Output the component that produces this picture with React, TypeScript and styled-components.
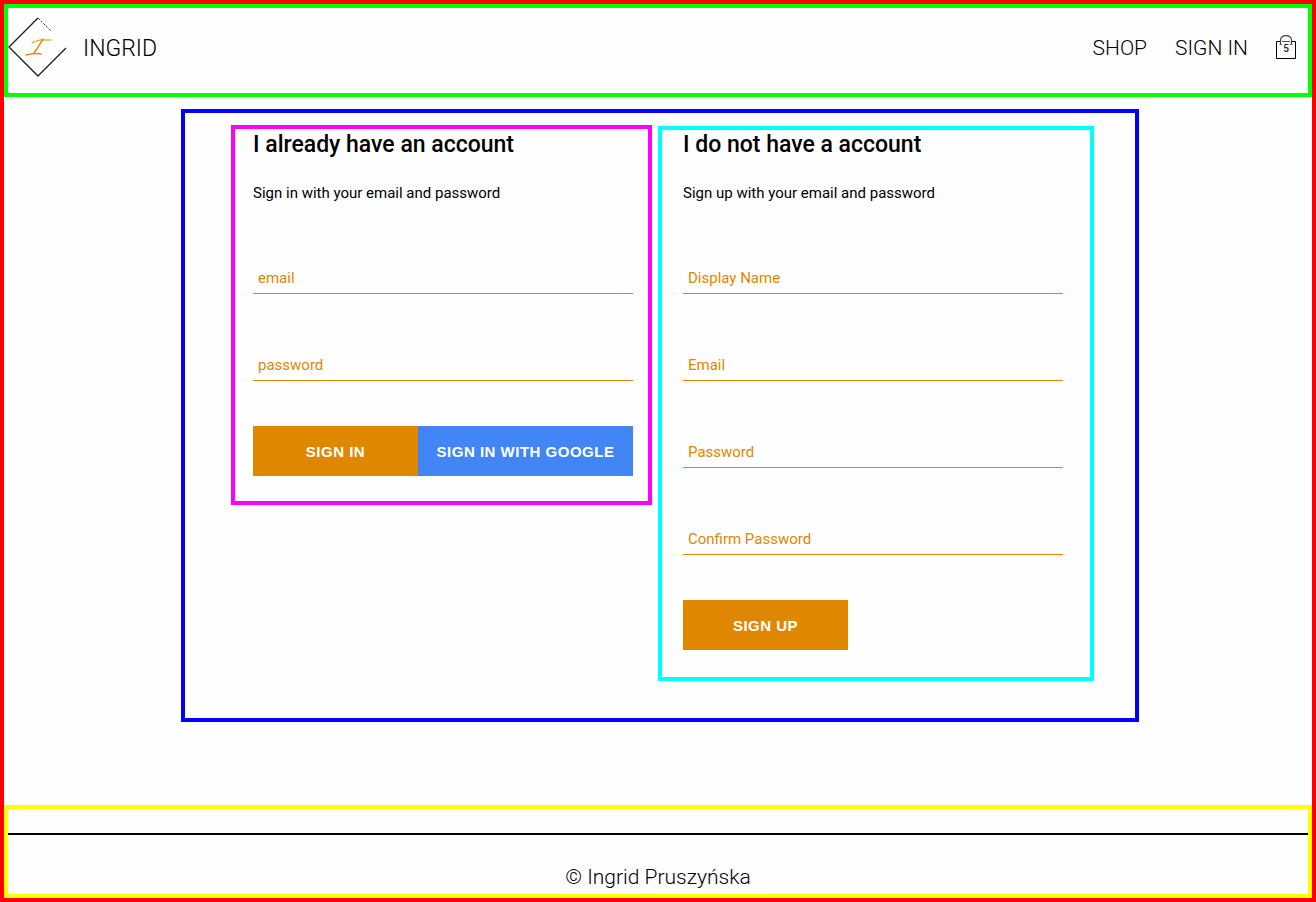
import React from "react";
import styled, { createGlobalStyle } from "styled-components";

const GlobalStyle = createGlobalStyle`
  *, *::before, *::after { box-sizing: border-box; }
  body {
    margin: 0;
    background: #fefefe;
    color: #000;
    font-family: Roboto, "Liberation Sans", sans-serif;
    font-weight: 400;
  }
`;

const Page = styled.div`
  display: flex;
  flex-direction: column;
  min-height: 100vh;
  border: 4px solid #f00;
`;

const Header = styled.header`
  display: flex;
  align-items: flex-start;
  justify-content: space-between;
  min-height: 93px;
  border: 4px solid #0f0;
  padding: 8px 12px 0 0;
`;

const Brand = styled.a`
  display: flex;
  align-items: center;
  gap: 15px;
  height: 62px;
  color: inherit;
  font-size: 23px;
  font-weight: 300;
  text-decoration: none;
`;

const BrandName = styled.span`
  padding-top: 2px;
`;

const Nav = styled.nav`
  display: flex;
  align-items: center;
  gap: 28px;
  height: 62px;
`;

const NavLink = styled.a`
  padding-top: 2px;
  color: inherit;
  font-size: 21px;
  font-weight: 300;
  text-decoration: none;
`;

const BagButton = styled.button`
  display: flex;
  border: 0;
  padding: 0;
  background: none;
  color: inherit;
  font-family: inherit;
  cursor: pointer;
`;

const Main = styled.main`
  display: flex;
  flex: 1;
  align-items: flex-start;
  justify-content: center;
  padding: 12px 0 12px 4px;
`;

const Accounts = styled.div`
  display: flex;
  flex-wrap: wrap;
  align-items: flex-start;
  gap: 6px;
  border: 4px solid #00f;
  padding: 12px 41px 37px 46px;
`;

const SignInPanel = styled.section`
  border: 4px solid #f0f;
  padding: 1px 15px 25px 18px;
`;

const SignUpPanel = styled.section`
  margin-top: 1px;
  border: 4px solid #0ff;
  padding: 0 27px 27px 21px;
`;

const Title = styled.h2`
  margin: 0;
  font-size: 23px;
  font-weight: 500;
  line-height: 30px;
`;

const Intro = styled.p`
  margin: 20px 0 56px;
  font-size: 15px;
  line-height: 26px;
`;

const Form = styled.form`
  display: flex;
  flex-direction: column;
  gap: 55px;
  width: 380px;
`;

const Input = styled.input`
  width: 100%;
  height: 32px;
  border: 0;
  border-bottom: 1px solid #e08700;
  border-radius: 0;
  padding: 0 5px;
  background: none;
  color: #e08700;
  font: inherit;
  font-size: 15px;

  &::placeholder {
    color: #e08700;
    opacity: 1;
  }
`;

const Actions = styled.div`
  display: flex;
  margin-top: -10px;
`;

const Button = styled.button<{ $google?: boolean }>`
  width: ${(p) => (p.$google ? "215px" : "165px")};
  height: 50px;
  border: 0;
  padding: 0;
  background: ${(p) => (p.$google ? "#4285f4" : "#e08700")};
  color: #fff;
  font: bold 15px "Liberation Sans", Arial, sans-serif;
  letter-spacing: 0.5px;
  text-transform: uppercase;
  cursor: pointer;
`;

const Footer = styled.footer`
  min-height: 93px;
  border: 4px solid #ff0;
  padding-top: 24px;
`;

const Copyright = styled.p`
  margin: 0;
  border-top: 2px solid #000;
  padding-top: 28px;
  font-size: 21px;
  font-weight: 300;
  line-height: 28px;
  text-align: center;
`;

const Logo = () => (
  <svg width="60" height="62" viewBox="0 0 60 62" fill="none" aria-hidden="true">
    <path d="M58 32 30 60 1 31 30 2" stroke="#222" strokeWidth="1.4" />
    <path d="M30 2 43 15" stroke="#444" strokeWidth="1" strokeDasharray="3 1 2 1.5" />
    <g stroke="#e08700" strokeLinecap="round">
      <path d="M24 27q8-4 11-3l8 0" strokeWidth="1" />
      <path d="M35 23q-4 7-9 14" strokeWidth="1.5" />
      <path d="M18 39q8-2 15-1" strokeWidth="1.3" />
    </g>
  </svg>
);

const Bag = ({ count }: { count: number }) => (
  <svg width="20" height="24" viewBox="0 0 20 24" fill="none">
    <path d="M4 6.500H.5V23.500H19.500V6.500H16" stroke="#000" />
    <path d="M6 6.500H14" stroke="#555" />
    <path d="M4.500 9V5Q5 .700 10 .700T15.500 5V9" stroke="#444" strokeWidth="1.200" />
    <path d="M3.500 9.500H6M14 9.500H16.500" stroke="#666" />
    <text x="10" y="17" textAnchor="middle" fontSize="10" fontWeight="500" fill="#222">
      {count}
    </text>
  </svg>
);

const Field = ({ label, type = "text" }: { label: string; type?: string }) => (
  <Input type={type} placeholder={label} aria-label={label} />
);

export default function App() {
  return (
    <>
      <GlobalStyle />
      <Page>
        <Header>
          <Brand href="#home">
            <Logo />
            <BrandName>INGRID</BrandName>
          </Brand>
          <Nav>
            <NavLink href="#shop">SHOP</NavLink>
            <NavLink href="#signin">SIGN IN</NavLink>
            <BagButton type="button" aria-label="Shopping bag">
              <Bag count={5} />
            </BagButton>
          </Nav>
        </Header>
        <Main>
          <Accounts>
            <SignInPanel>
              <Title>I already have an account</Title>
              <Intro>Sign in with your email and password</Intro>
              <Form>
                <Field label="email" type="email" />
                <Field label="password" type="password" />
                <Actions>
                  <Button type="submit">Sign in</Button>
                  <Button type="button" $google>
                    Sign in with Google
                  </Button>
                </Actions>
              </Form>
            </SignInPanel>
            <SignUpPanel>
              <Title>I do not have a account</Title>
              <Intro>Sign up with your email and password</Intro>
              <Form>
                <Field label="Display Name" />
                <Field label="Email" type="email" />
                <Field label="Password" type="password" />
                <Field label="Confirm Password" type="password" />
                <Actions>
                  <Button type="submit">Sign up</Button>
                </Actions>
              </Form>
            </SignUpPanel>
          </Accounts>
        </Main>
        <Footer>
          <Copyright>© Ingrid Pruszyńska</Copyright>
        </Footer>
      </Page>
    </>
  );
}
